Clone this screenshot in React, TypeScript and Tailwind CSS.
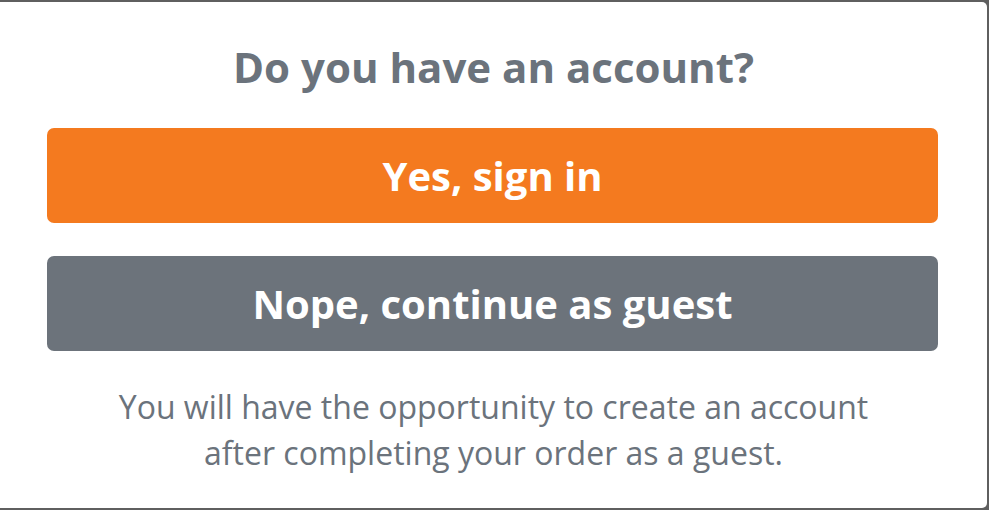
import React from 'react';

const App: React.FC = () => {
  return (
    <div className="w-[989px] h-[510px] bg-[#5f5f5f] py-[2px] pr-[2px] overflow-hidden" style={{ fontFamily: '"Open Sans", sans-serif' }}>
      <div className="h-full bg-white rounded-r-[5px] flex flex-col items-center pt-[39px]">
        <h1 className="text-[42px] leading-[52px] font-bold text-[#6b737c]">Do you have an account?</h1>
        <div className="w-full pl-[47px] pr-[49px] mt-[35px] flex flex-col gap-[33px]">
          <button className="w-full h-[95px] rounded-[7px] bg-[#f47a1f] text-white text-[40px] font-bold">
            Yes, sign in
          </button>
          <button className="w-full h-[95px] rounded-[7px] bg-[#6c737b] text-white text-[40px] font-bold">
            Nope, continue as guest
          </button>
        </div>
        <p className="mt-[33px] text-[32px] leading-[46px] text-[#6b737c] text-center">
          You will have the opportunity to create an account
          <br />
          after completing your order as a guest.
        </p>
      </div>
    </div>
  );
};

export default App;
